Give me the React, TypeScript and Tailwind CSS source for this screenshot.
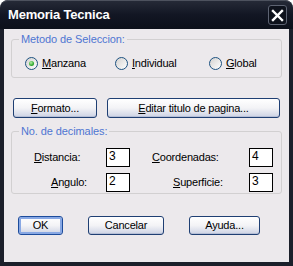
import React from 'react';

const font = "font-['Liberation_Sans',Arial,sans-serif]";

const Radio: React.FC<{ checked?: boolean; label: string; hot: string; width: string }> = ({
  checked = false,
  label,
  hot,
  width,
}) => {
  const rest = label.slice(hot.length);
  return (
    <div className={`flex items-center ${width}`}>
      <div className="w-[13px] h-[13px] rounded-full border border-[#1c5180] bg-gradient-to-br from-[#d4d2d0] to-[#ffffff] flex items-center justify-center shrink-0">
        {checked && (
          <div className="w-[5px] h-[5px] rounded-full bg-[radial-gradient(circle_at_40%_35%,#b8f0a8,#2fa82f_60%,#1d8a1d)]" />
        )}
      </div>
      <span className="ml-[4px] text-[11px] leading-[13px] tracking-[-0.2px] text-black">
        <span className="underline">{hot}</span>
        {rest}
      </span>
    </div>
  );
};

const XpButton: React.FC<{
  hot?: string;
  label: string;
  className: string;
  isDefault?: boolean;
}> = ({ hot = '', label, className, isDefault = false }) => (
  <button
    className={`${className} rounded-[3px] border bg-gradient-to-b from-[#ffffff] via-[#f3f3f6] to-[#cdd3e4] text-[11px] leading-[13px] tracking-[-0.2px] text-black flex items-center justify-center ${
      isDefault
        ? 'border-[#1d4c9c] shadow-[inset_0_0_0_2px_#88a8e4]'
        : 'border-[#1f3f73] shadow-[inset_0_-1px_0_#b6bfd6]'
    }`}
  >
    <span>
      {hot && <span className="underline">{hot}</span>}
      {label}
    </span>
  </button>
);

const GroupBox: React.FC<{ title: string; className: string; children: React.ReactNode }> = ({
  title,
  className,
  children,
}) => (
  <div className={`relative mx-[7px] rounded-[3px] border border-[#d2d0d1] ${className}`}>
    <span className="absolute left-[7px] top-[-7px] px-[2px] bg-[#ece9ec] text-[11px] leading-[13px] tracking-[-0.1px] text-[#4f76d2]">
      {title}
    </span>
    {children}
  </div>
);

const NumField: React.FC<{ value: string }> = ({ value }) => (
  <div className="w-[24px] h-[19px] bg-white border border-black pl-[2px] text-[12px] leading-[14px] text-black">
    {value}
  </div>
);

const FieldLabel: React.FC<{ hot: string; label: string; pad: string }> = ({ hot, label, pad }) => (
  <div className={`${pad} text-[11px] leading-[13px] tracking-[-0.2px] text-black`}>
    <span className="underline">{hot}</span>
    {label}
  </div>
);

export default function App() {
  return (
    <div
      className={`w-[293px] h-[266px] bg-[#1b1f2a] rounded-t-[8px] flex flex-col overflow-hidden ${font}`}
    >
      {/* Title bar */}
      <div className="h-[29px] shrink-0 flex items-center justify-between pl-[8px] pr-[6px] rounded-t-[8px] border-t border-[#4d525e] bg-gradient-to-b from-[#252a37] via-[#121623] to-[#0c101a]">
        <span className="text-white font-bold text-[13px] leading-[16px] tracking-[-0.2px]">Memoria Tecnica</span>
        <div className="w-[19px] h-[20px] rounded-[3px] border border-[#5d6372] bg-[#0e121c] flex items-center justify-center">
          <svg width="13" height="13" viewBox="0 0 13 13">
            <path d="M2 2 L11 11 M11 2 L2 11" stroke="#ffffff" strokeWidth="2.4" strokeLinecap="square" />
          </svg>
        </div>
      </div>

      {/* Client area */}
      <div className="flex-1 mx-[4px] mb-[4px] bg-[#ece9ec] flex flex-col">
        <GroupBox title="Metodo de Seleccion:" className="mt-[10px] h-[39px]">
          <div className="flex pt-[17px] pl-[13px]">
            <Radio checked hot="M" label="Manzana" width="w-[90px]" />
            <Radio hot="I" label="Individual" width="w-[94px]" />
            <Radio hot="G" label="Global" width="w-[70px]" />
          </div>
        </GroupBox>

        <div className="flex mt-[20px] ml-[9px] gap-[10px]">
          <XpButton hot="F" label="ormato..." className="w-[84px] h-[20px]" />
          <XpButton hot="E" label="ditar titulo de pagina..." className="w-[173px] h-[20px]" />
        </div>

        <GroupBox title="No. de decimales:" className="mt-[13px] h-[63px]">
          <div className="grid grid-cols-[94px_24px_119px_24px] gap-y-[6px] items-center pt-[16px]">
            <FieldLabel hot="D" label="istancia:" pad="pl-[22px]" />
            <NumField value="3" />
            <FieldLabel hot="C" label="oordenadas:" pad="pl-[22px]" />
            <NumField value="4" />
            <FieldLabel hot="A" label="ngulo:" pad="pl-[39px]" />
            <NumField value="2" />
            <FieldLabel hot="S" label="uperficie:" pad="pl-[43px]" />
            <NumField value="3" />
          </div>
        </GroupBox>

        <div className="flex mt-[22px] ml-[14px] gap-[25px]">
          <XpButton label="OK" className="w-[45px] h-[19px]" isDefault />
          <XpButton label="Cancelar" className="w-[76px] h-[19px]" />
          <XpButton label="Ayuda..." className="w-[71px] h-[19px]" />
        </div>
      </div>
    </div>
  );
}
